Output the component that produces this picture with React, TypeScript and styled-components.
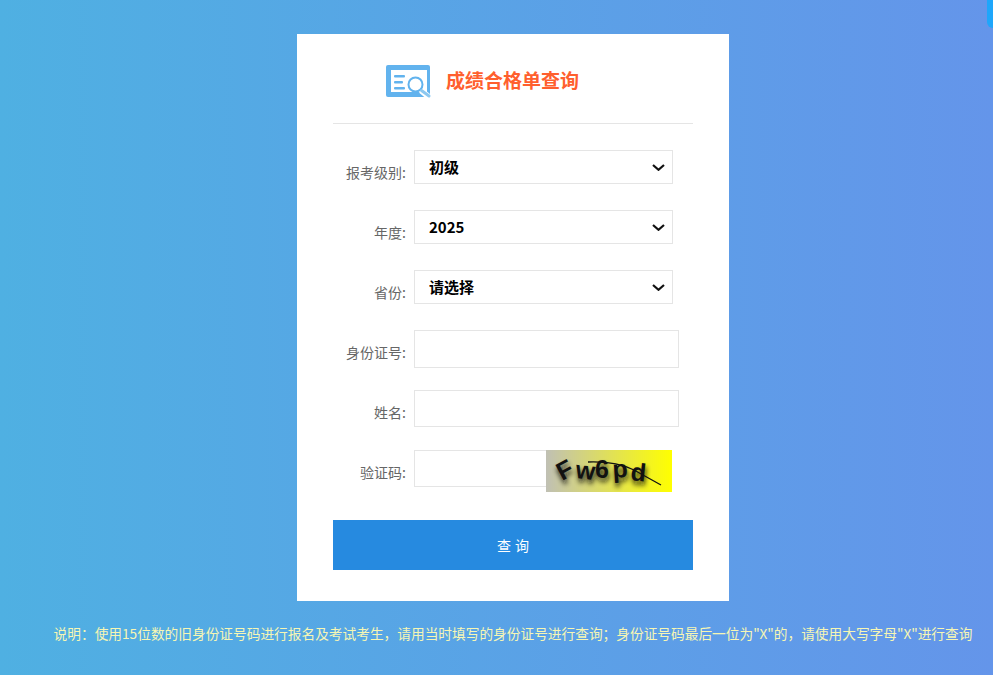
import * as React from 'react'

import styled, { createGlobalStyle } from 'styled-components'

const GlobalStyle = createGlobalStyle`
  html, body {
    margin: 0;
    padding: 0;
    height: 100%;
    overflow: hidden;
  }
  body {
    font-family: "Noto Sans CJK SC", "Liberation Sans", sans-serif;
  }
`

const Page = styled.div`
  box-sizing: border-box;
  height: 675px;
  padding: 34px 0 0 33px;
  display: flex;
  flex-direction: column;
  align-items: center;
  background: linear-gradient(90deg, #4fb0e2, #6495ea);
`

const EdgeTab = styled.div`
  position: fixed;
  top: 0;
  right: 0;
  width: 6px;
  height: 28px;
  background: #1ea6fb;
  border-radius: 0 0 0 6px;
`

const Card = styled.div`
  box-sizing: border-box;
  width: 432px;
  height: 567px;
  padding: 0 36px;
  background: #fff;
`

const Header = styled.div`
  height: 90px;
  display: flex;
  align-items: center;
  gap: 14px;
  padding-left: 53px;
  box-sizing: border-box;
  border-bottom: 1px solid #e5e5e5;
  margin-bottom: 26px;
`

const Icon = styled.svg`
  align-self: flex-start;
  margin-top: 31px;
  width: 46px;
  height: 34px;
`

const Title = styled.h2`
  margin: 0;
  padding-top: 1px;
  font-size: 19px;
  font-weight: bold;
  color: #ff5f2e;
`

const Row = styled.div<{ $tall?: boolean }>`
  display: flex;
  align-items: flex-start;
  height: ${(p) => (p.$tall ? '70px' : '60px')};
`

const Label = styled.label`
  width: 73px;
  margin-right: 8px;
  padding-top: 13px;
  font-size: 14px;
  line-height: 18px;
  color: #666;
  text-align: right;
  white-space: nowrap;
`

const SelectBox = styled.div`
  position: relative;
  width: 259px;
  height: 34px;
`

const Select = styled.select`
  box-sizing: border-box;
  display: block;
  width: 100%;
  height: 100%;
  padding: 0 0 2px 14px;
  border: 1px solid #e5e5e5;
  border-radius: 0;
  outline: none;
  appearance: none;
  background: #fff;
  color: #000;
  font-family: inherit;
  font-size: 15px;
  font-weight: bold;
`

const Arrow = styled.svg`
  position: absolute;
  top: 14px;
  right: 8px;
  width: 13px;
  height: 7px;
  pointer-events: none;
`

const Input = styled.input<{ $w?: number; $h?: number }>`
  box-sizing: border-box;
  width: ${(p) => p.$w ?? 265}px;
  height: ${(p) => p.$h ?? 38}px;
  padding: 0 10px;
  border: 1px solid #e5e5e5;
  border-right-width: ${(p) => (p.$w ? 0 : 1)}px;
  outline: none;
  background: #fff;
`

const Captcha = styled.svg`
  display: block;
  width: 126px;
  height: 42px;
`

const SubmitButton = styled.button`
  display: block;
  width: 100%;
  height: 50px;
  border: 0;
  background: #268ae0;
  color: #fff;
  font-family: "Liberation Sans", "Noto Sans CJK SC", sans-serif;
  font-size: 14px;
`

const Note = styled.p`
  margin: 23px 0 0;
  font-size: 13.7px;
  line-height: 18px;
  color: #f6f6b4;
  white-space: nowrap;
`

const SearchIcon = () => (
  <Icon viewBox="0 0 46 34">
    <rect x="0" y="0" width="44" height="32" rx="2" fill="#62b3ee" />
    <rect x="5" y="5" width="36" height="22" fill="#fff" />
    <rect x="8" y="10" width="11" height="2.4" rx="1" fill="#62b3ee" />
    <rect x="8" y="16" width="9" height="2.4" rx="1" fill="#62b3ee" />
    <rect x="8" y="22" width="11" height="2.4" rx="1" fill="#62b3ee" />
    <path d="M35 25.5 L43 32" stroke="#fff" strokeWidth="6" />
    <circle cx="29.5" cy="19.5" r="7" fill="#fff" stroke="#62b3ee" strokeWidth="2" />
    <path d="M35.5 25.5 L43 31" stroke="#8cc8f0" strokeWidth="3" strokeLinecap="round" />
  </Icon>
)

const Chevron = () => (
  <Arrow viewBox="0 0 13 7">
    <path d="M1 1 L6.5 5.8 L12 1" stroke="#111" strokeWidth="2.2" fill="none" />
  </Arrow>
)

const CaptchaImage = () => (
  <Captcha viewBox="0 0 126 42">
    <defs>
      <linearGradient id="captchaBg" x1="0" y1="0" x2="1" y2="0">
        <stop offset="0" stopColor="#c0c0b4" />
        <stop offset="1" stopColor="#ffff00" />
      </linearGradient>
      <filter id="captchaBlur" x="-20%" y="-40%" width="140%" height="180%">
        <feGaussianBlur stdDeviation="2.4" />
      </filter>
      <text
        id="captchaCode"
        x="16 29 49 67 84"
        y="31 28 28 28 30"
        rotate="-28 6 0 -4 6"
        fontFamily="Liberation Sans"
        fontSize="25"
        fontWeight="bold"
        fill="#111"
      >
        Fw6pd
      </text>
    </defs>
    <rect width="126" height="42" fill="url(#captchaBg)" />
    <use href="#captchaCode" filter="url(#captchaBlur)" opacity="0.9" transform="translate(1 4)" />
    <use href="#captchaCode" />
    <path d="M42 12 Q70 11 88 20 L115 35" stroke="#111" strokeWidth="1.3" fill="none" />
  </Captcha>
)

const App = () => {
  return (
    <Page>
      <GlobalStyle />
      <EdgeTab />
      <Card>
        <Header>
          <SearchIcon />
          <Title>成绩合格单查询</Title>
        </Header>
        <Row>
          <Label>报考级别:</Label>
          <SelectBox>
            <Select defaultValue="初级">
              <option>初级</option>
              <option>中级</option>
            </Select>
            <Chevron />
          </SelectBox>
        </Row>
        <Row>
          <Label>年度:</Label>
          <SelectBox>
            <Select defaultValue="2025">
              <option>2025</option>
              <option>2024</option>
            </Select>
            <Chevron />
          </SelectBox>
        </Row>
        <Row>
          <Label>省份:</Label>
          <SelectBox>
            <Select defaultValue="请选择">
              <option>请选择</option>
            </Select>
            <Chevron />
          </SelectBox>
        </Row>
        <Row>
          <Label>身份证号:</Label>
          <Input />
        </Row>
        <Row>
          <Label>姓名:</Label>
          <Input $h={37} />
        </Row>
        <Row $tall>
          <Label>验证码:</Label>
          <Input $w={132} $h={37} />
          <CaptchaImage />
        </Row>
        <SubmitButton>查 询</SubmitButton>
      </Card>
      <Note>说明：使用15位数的旧身份证号码进行报名及考试考生，请用当时填写的身份证号进行查询；身份证号码最后一位为"X"的，请使用大写字母"X"进行查询</Note>
    </Page>
  )
}

export default App
